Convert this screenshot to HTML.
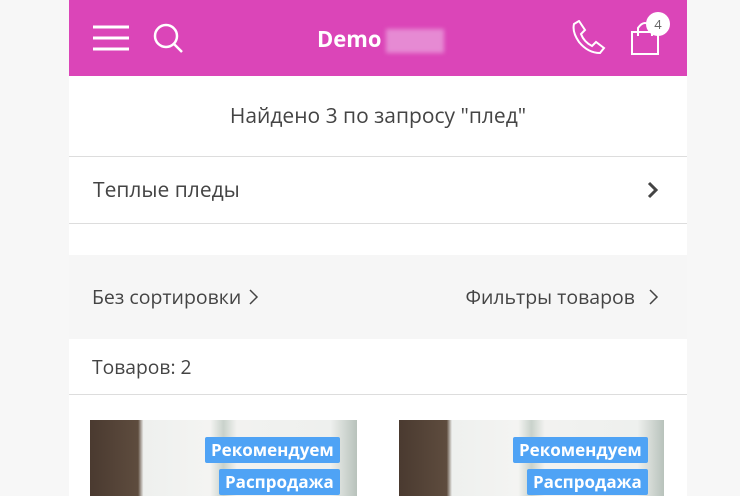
<!DOCTYPE html>
<html><head><meta charset="utf-8"><style>
*{margin:0;padding:0;box-sizing:border-box}
body{width:740px;height:496px;overflow:hidden;background:#f7f7f7;font-family:"Open Sans","Liberation Sans",sans-serif;color:#444}
.wrap{position:absolute;left:69px;top:0;width:618px;height:496px;background:#fff}
.hdr{height:76px;background:#db45b8;position:relative}
.ttl{position:absolute;left:248px;top:24px;color:#fff;font-weight:bold;font-size:22px}
.blur{display:inline-block;width:58px;height:24px;background:#e68ad3;vertical-align:middle;margin-left:4px;filter:blur(2px)}
.row{position:absolute;left:0;width:618px;font-size:21px}
.badge{position:absolute;background:#4fa3f5;color:#fff;font-weight:bold;font-size:17px;padding:0 6px;height:26px;line-height:26px;border-radius:2px}
.img{position:absolute;top:420px;height:76px;background:linear-gradient(90deg,#4a3a30 0,#5e4c3e 18%,#eef0ee 20%,#f4f4f2 45%,#c9d2cb 50%,#f2f2f0 55%,#eef0ee 90%,#b8c2bb 100%)}
</style></head><body>
<div class="wrap">
<div class="hdr">
<svg style="position:absolute;left:24px;top:24px" width="36" height="28"><g stroke="#fff" stroke-width="3"><line x1="0" y1="3" x2="36" y2="3"/><line x1="0" y1="14" x2="36" y2="14"/><line x1="0" y1="25" x2="36" y2="25"/></g></svg>
<svg style="position:absolute;left:84px;top:22px" width="32" height="32"><circle cx="13" cy="14" r="11" fill="none" stroke="#fff" stroke-width="2.5"/><line x1="21" y1="22" x2="29" y2="30" stroke="#fff" stroke-width="2.5"/></svg>
<div class="ttl">Demo<span class="blur"></span></div>
<svg style="position:absolute;left:501px;top:20px" width="36" height="34" viewBox="0 0 36 34"><path d="M4 4 L9 1 L15 10 L11 14 Q14 22 22 26 L26 22 L34 28 L30 33 Q18 33 9 22 Q2 12 4 4Z" fill="none" stroke="#fff" stroke-width="2"/></svg>
<svg style="position:absolute;left:560px;top:20px" width="34" height="36"><path d="M3 12 H29 V34 H3Z" fill="none" stroke="#fff" stroke-width="2"/><path d="M9 16 V8 Q16 -2 23 8 V16" fill="none" stroke="#fff" stroke-width="2"/></svg>
<div style="position:absolute;left:577px;top:12px;width:24px;height:24px;border-radius:12px;background:#fff;color:#666;font-size:13px;text-align:center;line-height:24px">4</div>
</div>
<div class="row" style="top:76px;height:81px;line-height:81px;text-align:center;border-bottom:1px solid #ddd">Найдено 3 по запросу "плед"</div>
<div class="row" style="top:157px;height:67px;line-height:66px;padding-left:24px;border-bottom:1px solid #ddd">Теплые пледы
<svg style="position:absolute;left:578px;top:24px" width="12" height="18"><path d="M2 2 L9 9 L2 16" fill="none" stroke="#444" stroke-width="3"/></svg></div>
<div class="row" style="top:255px;height:84px;background:#f6f6f6;line-height:84px;font-size:19.5px">
<span style="position:absolute;left:23px">Без сортировки</span>
<svg style="position:absolute;left:180px;top:34px" width="10" height="18"><path d="M1 1 L8 8 L1 15" fill="none" stroke="#444" stroke-width="1.5"/></svg>
<span style="position:absolute;right:52px">Фильтры товаров</span>
<svg style="position:absolute;left:580px;top:34px" width="10" height="18"><path d="M1 1 L8 8 L1 15" fill="none" stroke="#444" stroke-width="1.5"/></svg>
</div>
<div class="row" style="top:339px;height:56px;line-height:56px;padding-left:23px;border-bottom:1px solid #ddd;font-size:19.3px">Товаров: 2</div>
<div class="img" style="left:21px;width:267px"></div>
<div class="img" style="left:330px;width:265px"></div>
<div class="badge" style="left:136px;top:437px">Рекомендуем</div>
<div class="badge" style="left:150px;top:469px">Распродажа</div>
<div class="badge" style="left:444px;top:437px">Рекомендуем</div>
<div class="badge" style="left:458px;top:469px">Распродажа</div>
</div>
</body></html>
